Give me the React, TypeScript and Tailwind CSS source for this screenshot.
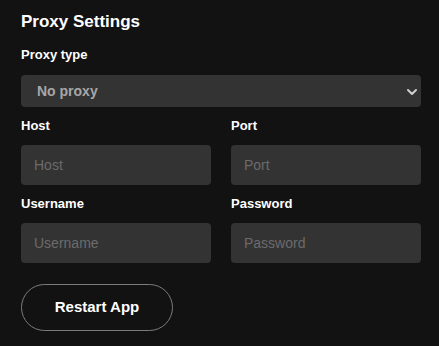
import { ChevronDown } from "lucide-react";

function Field({ label, placeholder }: { label: string; placeholder: string }) {
  return (
    <div className="flex flex-col">
      <label className="mb-[9px] text-[13px] font-bold leading-[20px] text-white">
        {label}
      </label>
      <input
        type={label === "Password" ? "password" : "text"}
        placeholder={placeholder}
        className="h-[40px] w-full rounded-[4px] bg-[#333333] px-[13px] text-[14px] text-white outline-none placeholder:text-[#6b6b6b]"
      />
    </div>
  );
}

export default function App() {
  return (
    <div
      className="min-h-screen bg-[#121212] pl-[21px] pr-[18px] pt-[10px] text-white"
      style={{ fontFamily: "'Liberation Sans', Arial, sans-serif" }}
    >
      <h2 className="text-[17px] font-bold leading-[24px]">Proxy Settings</h2>

      <div className="mt-[11px] flex flex-col">
        <label className="mb-[10px] text-[13px] font-bold leading-[20px]">Proxy type</label>
        <div className="relative h-[32px] w-full rounded-[4px] bg-[#333333]">
          <select className="h-full w-full appearance-none bg-transparent px-[16px] text-[14px] font-bold text-[#a7a7a7] outline-none">
            <option>No proxy</option>
            <option>HTTP</option>
            <option>SOCKS4</option>
            <option>SOCKS5</option>
          </select>
          <ChevronDown
            size={16}
            strokeWidth={3}
            className="pointer-events-none absolute right-[1px] top-[9px] text-[#cfcfcf]"
          />
        </div>
      </div>

      <div className="mt-[9px] grid grid-cols-2 gap-x-[20px] gap-y-[9px]">
        <Field label="Host" placeholder="Host" />
        <Field label="Port" placeholder="Port" />
        <Field label="Username" placeholder="Username" />
        <Field label="Password" placeholder="Password" />
      </div>

      <button className="mt-[21px] h-[47px] w-[152px] rounded-full border border-[#7c7c7c] text-[15px] font-bold text-white">
        Restart App
      </button>
    </div>
  );
}
